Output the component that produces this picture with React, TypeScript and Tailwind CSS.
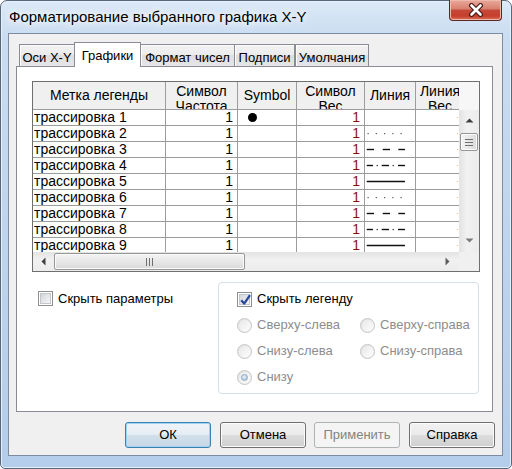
import React from "react";

const rows = [
  { n: 1, dot: true, line: "" },
  { n: 2, line: "dot" },
  { n: 3, line: "dash" },
  { n: 4, line: "dashdot" },
  { n: 5, line: "solid" },
  { n: 6, line: "dot" },
  { n: 7, line: "dash" },
  { n: 8, line: "dashdot" },
  { n: 9, line: "solid" },
];

function LinePattern({ kind }: { kind: string }) {
  if (!kind) return null;
  return (
    <svg width="50" height="15" className="block">
      {kind === "dot" &&
        [2.5, 10.7, 19, 27.3, 35.5].map((x) => (
          <rect key={x} x={x} y={7} width={1.2} height={1.2} fill="#555" />
        ))}
      {kind === "dash" &&
        [
          [1.7, 9],
          [17.7, 25],
          [33.3, 40],
        ].map(([a, b]) => (
          <line key={a} x1={a} x2={b} y1={7.5} y2={7.5} stroke="#111" strokeWidth={1.4} />
        ))}
      {kind === "dashdot" && (
        <g>
          {[
            [1.7, 8],
            [16.7, 24],
            [33, 40],
          ].map(([a, b]) => (
            <line key={a} x1={a} x2={b} y1={7.5} y2={7.5} stroke="#111" strokeWidth={1.4} />
          ))}
          <rect x={11.6} y={6.9} width={1.3} height={1.3} fill="#333" />
          <rect x={27.6} y={6.9} width={1.3} height={1.3} fill="#333" />
        </g>
      )}
      {kind === "solid" && (
        <line x1={1.7} x2={40} y1={7.5} y2={7.5} stroke="#111" strokeWidth={1.7} />
      )}
    </svg>
  );
}

function CheckBox({ checked }: { checked?: boolean }) {
  return (
    <span className="w-[15px] h-[15px] border border-[#8e8f8f] bg-white p-[1px] flex shrink-0">
      <span className="flex-1 border border-[#c3c7cc] bg-[linear-gradient(135deg,#d3d6da,#f6f6f7)] flex items-center justify-center relative">
        {checked && (
          <svg width="13" height="13" viewBox="0 0 13 13" className="absolute left-[-1px] top-[-2px]">
            <path d="M2.2 7.2 L5.2 10.6 L11 2.2" fill="none" stroke="#2a4a9c" strokeWidth="2.3" strokeLinejoin="round" />
          </svg>
        )}
      </span>
    </span>
  );
}

function Radio({ selected }: { selected?: boolean }) {
  return (
    <span className="w-[15px] h-[15px] rounded-full border border-[#c6c6c6] bg-[linear-gradient(135deg,#dedede,#fafafa)] flex items-center justify-center shrink-0">
      <span className="w-[11px] h-[11px] rounded-full bg-[linear-gradient(135deg,#e8e8e8,#fdfdfd)] flex items-center justify-center">
        {selected && (
          <span className="w-[7px] h-[7px] rounded-full bg-[radial-gradient(circle_at_40%_35%,#eaf2f9,#9cb8d2)] border border-[#8eaac4]" />
        )}
      </span>
    </span>
  );
}

function Btn({ label, kind }: { label: string; kind?: "def" | "dis" }) {
  const cls =
    kind === "def"
      ? "border-[#3c7fb1] bg-[linear-gradient(180deg,#eef4f9_0%,#e5edf4_50%,#d3e0eb_50%,#c6d7e6_100%)] shadow-[inset_0_0_0_1px_#9fd3f3] text-black"
      : kind === "dis"
      ? "border-[#adb2b5] bg-[#f4f4f4] text-[#838383]"
      : "border-[#707070] bg-[linear-gradient(180deg,#f2f2f2_0%,#ebebeb_50%,#dddddd_50%,#cfcfcf_100%)] shadow-[inset_0_0_0_1px_#fbfbfb] text-black";
  return (
    <div className={`w-[86px] h-[26px] rounded-[3px] border flex items-center justify-center text-[13px] ${cls}`}>
      {label}
    </div>
  );
}

function Tab({ label, selected, first, last }: { label: string; selected?: boolean; first?: boolean; last?: boolean }) {
  if (selected) {
    return (
      <div className="w-[67px] h-[25px] -mb-px border border-b-0 border-[#898c95] bg-white flex justify-center pt-[3px] text-[13px] relative z-10">
        {label}
      </div>
    );
  }
  return (
    <div
      className={`h-[22px] border-t border-[#898c95] ${first ? "border-l" : ""} ${last ? "border-r border-l" : ""} ${
        !first && !last ? "border-r" : ""
      } bg-[linear-gradient(180deg,#f3f3f3_0%,#ebebeb_50%,#dedede_50%,#e6e6e6_100%)] shadow-[inset_1px_1px_0_#fdfdfd] flex justify-center pt-[3px] text-[13px]`}
    >
      {label}
    </div>
  );
}

export default function App() {
  return (
    <div className="w-[512px] h-[469px] bg-white font-['Liberation_Sans',Arial,sans-serif] text-[13px] text-black overflow-hidden">
      <div className="w-[512px] h-[469px] rounded-t-[7px] rounded-b-[5px] border border-[#59677a] bg-[linear-gradient(180deg,#dce9f7_0%,#c9dcf1_8%,#bcd3ee_60%,#b4cdea_100%)] shadow-[inset_0_0_0_1px_#e6f0fb] flex flex-col">
        {/* title bar */}
        <div className="h-[32px] flex justify-between items-start pl-[8px] pr-[9px] shrink-0">
          <div className="mt-[7px] leading-[18px] text-[15px] text-black [text-shadow:0_0_6px_#ffffff,0_0_10px_#ffffff]">
            Форматирование выбранного графика X-Y
          </div>
          <div className="w-[53px] h-[21px] mt-[-1px] rounded-b-[4px] border border-t-0 border-[#5c2620] bg-[linear-gradient(180deg,#e9a99b_0%,#d8806f_45%,#c5493a_50%,#c73e2c_80%,#d7735a_100%)] shadow-[inset_0_0_0_1px_#efb9ad] flex items-center justify-center">
            <svg width="18" height="14" viewBox="0 0 18 14">
              <path d="M4.5 2.5 L13.5 11.5 M13.5 2.5 L4.5 11.5" stroke="#4a1c17" strokeWidth="5" strokeLinecap="round" />
              <path d="M4.5 2.5 L13.5 11.5 M13.5 2.5 L4.5 11.5" stroke="#ffffff" strokeWidth="2.6" strokeLinecap="round" />
            </svg>
          </div>
        </div>

        {/* client area */}
        <div className="ml-[7px] mr-[8px] h-[423px] border border-[#7d8ca0] bg-[#f0f0f0] flex flex-col">
          <div className="pt-[8px] pl-[7px]">
            {/* tabs */}
            <div className="h-[24px] flex items-end pl-[3px]">
              <div className="w-[55px]">
                <Tab label="Оси X-Y" first />
              </div>
              <Tab label="Графики" selected />
              <div className="w-[94px]">
                <Tab label="Формат чисел" />
              </div>
              <div className="w-[60px]">
                <Tab label="Подписи" />
              </div>
              <div className="w-[74px]">
                <Tab label="Умолчания" last />
              </div>
            </div>
            {/* panel */}
            <div className="w-[477px] h-[346px] border border-[#898c95] bg-white pt-[14px] pl-[15px] flex flex-col">
              {/* grid */}
              <div className="w-[448px] h-[191px] border border-[#6f6f6f] flex flex-col bg-white text-[14px]">
                <div className="flex h-[170px]">
                  <div className="w-[426px] flex flex-col overflow-hidden">
                    {/* header */}
                    <div className="h-[28px] flex border-b border-[#9c9c9c] bg-[#f0f0f0] shrink-0">
                      <div className="w-[133px] border-r border-[#9c9c9c] flex items-center justify-center">Метка легенды</div>
                      <div className="w-[72px] border-r border-[#9c9c9c] overflow-hidden pt-[2px] leading-[15px] text-center">
                        Символ
                        <br />
                        Частота
                      </div>
                      <div className="w-[59px] border-r border-[#9c9c9c] flex items-center justify-center">Symbol</div>
                      <div className="w-[68px] border-r border-[#9c9c9c] overflow-hidden pt-[2px] leading-[15px] text-center">
                        Символ
                        <br />
                        Вес
                      </div>
                      <div className="w-[51px] border-r border-[#9c9c9c] flex items-center justify-center">Линия</div>
                      <div className="w-[43px] overflow-hidden pt-[2px] leading-[15px]">
                        <div className="w-[48px] text-center">
                          Линия
                          <br />
                          Вес
                        </div>
                      </div>
                    </div>
                    {/* rows */}
                    <div className="flex-1 overflow-hidden">
                      {rows.map((r) => (
                        <div key={r.n} className="h-[16px] flex border-b border-[#9c9c9c] leading-[15px]">
                          <div className="w-[133px] border-r border-[#9c9c9c] pl-[1px] whitespace-nowrap">трассировка {r.n}</div>
                          <div className="w-[72px] border-r border-[#9c9c9c] text-right pr-[4px]">1</div>
                          <div className="w-[59px] border-r border-[#9c9c9c] flex items-center pl-[10px]">
                            {r.dot && <span className="w-[9px] h-[9px] rounded-full bg-black" />}
                          </div>
                          <div className="w-[68px] border-r border-[#9c9c9c] text-right pr-[4px] text-[#8a0f0f]">1</div>
                          <div className="w-[51px] border-r border-[#9c9c9c]">
                            <LinePattern kind={r.line} />
                          </div>
                          <div className="w-[43px] flex justify-end items-center">
                            <span className="w-[1px] h-[1px] bg-[#f0b060] mr-[1px]" />
                          </div>
                        </div>
                      ))}
                    </div>
                  </div>
                  {/* vertical scrollbar column */}
                  <div className="w-[20px] flex flex-col">
                    <div className="h-[28px] bg-[#f7f7f7] shrink-0" />
                    <div className="flex-1 bg-[linear-gradient(90deg,#e3e3e3,#f1f1f1_40%,#ececec)] flex flex-col items-center">
                      <div className="h-[20px] w-full flex items-center justify-center">
                        <svg width="9" height="5" viewBox="0 0 9 5">
                          <path d="M0.5 4.5 L4.5 0.5 L8.5 4.5 Z" fill="#3f3f3f" />
                        </svg>
                      </div>
                      <div className="mt-[3px] w-[18px] h-[18px] rounded-[2px] border border-[#969696] bg-[linear-gradient(90deg,#f3f3f3,#e8e8e8_50%,#d9d9d9)] shadow-[inset_0_0_0_1px_#fbfbfb] flex flex-col items-center justify-center gap-[2px]">
                        <span className="w-[8px] h-[1px] bg-[#6f6f6f]" />
                        <span className="w-[8px] h-[1px] bg-[#6f6f6f]" />
                        <span className="w-[8px] h-[1px] bg-[#6f6f6f]" />
                      </div>
                      <div className="flex-1" />
                      <div className="h-[22px] w-full flex items-center justify-center pb-[2px]">
                        <svg width="9" height="5" viewBox="0 0 9 5">
                          <path d="M0.5 0.5 L4.5 4.5 L8.5 0.5 Z" fill="#7a7a7a" />
                        </svg>
                      </div>
                    </div>
                  </div>
                </div>
                {/* horizontal scrollbar */}
                <div className="flex h-[19px]">
                  <div className="w-[426px] bg-[linear-gradient(180deg,#e3e3e3,#f1f1f1_40%,#ececec)] flex items-center">
                    <div className="w-[20px] h-full flex items-center justify-center pl-[1px]">
                      <svg width="5" height="9" viewBox="0 0 5 9">
                        <path d="M4.5 0.5 L0.5 4.5 L4.5 8.5 Z" fill="#3f3f3f" />
                      </svg>
                    </div>
                    <div className="ml-[1px] w-[191px] h-[17px] rounded-[2px] border border-[#969696] bg-[linear-gradient(180deg,#f3f3f3,#e8e8e8_50%,#d9d9d9)] shadow-[inset_0_0_0_1px_#fbfbfb] flex items-center justify-center gap-[2px]">
                      <span className="w-[1px] h-[8px] bg-[#6f6f6f]" />
                      <span className="w-[1px] h-[8px] bg-[#6f6f6f]" />
                      <span className="w-[1px] h-[8px] bg-[#6f6f6f]" />
                    </div>
                    <div className="flex-1" />
                    <div className="w-[22px] h-full flex items-center justify-center pr-[2px]">
                      <svg width="5" height="9" viewBox="0 0 5 9">
                        <path d="M0.5 0.5 L4.5 4.5 L0.5 8.5 Z" fill="#5f5f5f" />
                      </svg>
                    </div>
                  </div>
                  <div className="w-[20px] bg-[#f0f0f0]" />
                </div>
              </div>

              {/* options */}
              <div className="flex mt-[10px]">
                <div className="w-[186px] pl-[6px] pt-[9px]">
                  <div className="flex items-center gap-[5px] h-[15px]">
                    <CheckBox />
                    <span>Скрыть параметры</span>
                  </div>
                </div>
                <div className="w-[261px] h-[112px] rounded-[4px] border border-[#d5dfe5] pl-[18px] pt-[3px]">
                  <div className="h-[26px] flex items-center gap-[5px]">
                    <CheckBox checked />
                    <span>Скрыть легенду</span>
                  </div>
                  <div className="grid grid-cols-[123px_1fr] text-[#8d8d8d]">
                    <div className="h-[26px] flex items-center gap-[5px]">
                      <Radio />
                      <span>Сверху-слева</span>
                    </div>
                    <div className="h-[26px] flex items-center gap-[5px]">
                      <Radio />
                      <span>Сверху-справа</span>
                    </div>
                    <div className="h-[26px] flex items-center gap-[5px]">
                      <Radio />
                      <span>Снизу-слева</span>
                    </div>
                    <div className="h-[26px] flex items-center gap-[5px]">
                      <Radio />
                      <span>Снизу-справа</span>
                    </div>
                    <div className="h-[26px] flex items-center gap-[5px]">
                      <Radio selected />
                      <span>Снизу</span>
                    </div>
                  </div>
                </div>
              </div>
            </div>
          </div>
          {/* buttons */}
          <div className="flex justify-end pr-[7px] mt-[10px]">
            <Btn label="ОК" kind="def" />
            <div className="w-[9px]" />
            <Btn label="Отмена" />
            <div className="w-[8px]" />
            <Btn label="Применить" kind="dis" />
            <div className="w-[9px]" />
            <Btn label="Справка" />
          </div>
        </div>
      </div>
    </div>
  );
}
